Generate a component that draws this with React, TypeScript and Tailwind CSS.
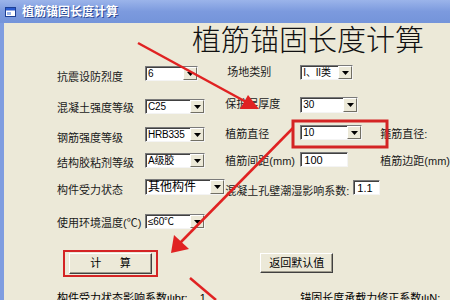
import React from 'react';

// 下拉框 (Win 经典风格)
const Combo: React.FC<{ value: string; w: string; h?: string; big?: boolean }> = ({ value, w, h = 'h-[15px]', big }) => (
  <div className={`${w} ${h} flex bg-white border border-t-[#7a7a7a] border-l-[#7a7a7a] border-b-[#f4f4f4] border-r-[#f4f4f4] shadow-[inset_1px_1px_0_#404040]`}>
    <span className={`flex-1 pl-[2px] pt-[1px] ${big ? 'text-[12px]' : 'text-[10px] tracking-[-0.2px]'} leading-[12px] text-black whitespace-nowrap overflow-hidden`}>{value}</span>
    <span className="w-[14px] shrink-0 h-full bg-[#ece9d8] border border-t-white border-l-white border-b-[#716f64] border-r-[#716f64] flex items-center justify-center">
      <svg width="7" height="4" viewBox="0 0 7 4"><polygon points="0,0 7,0 3.5,4" fill="#000" /></svg>
    </span>
  </div>
);

// 文本框
const Field: React.FC<{ value: string; w: string }> = ({ value, w }) => (
  <div className={`${w} h-[15px] bg-white border border-t-[#7a7a7a] border-l-[#7a7a7a] border-b-[#f4f4f4] border-r-[#f4f4f4] shadow-[inset_1px_1px_0_#404040] pl-[3px] pt-[1px] text-[11px] leading-[12px] text-black`}>
    {value}
  </div>
);

const Label: React.FC<{ text: string; w?: string }> = ({ text, w = '' }) => (
  <span className={`${w} text-[11px] leading-[14px] text-[#1a1a1a] whitespace-nowrap`}>{text}</span>
);

const App: React.FC = () => {
  return (
    <div
      className="relative w-[450px] h-[300px] overflow-hidden bg-[#ece9d8] flex flex-col"
      style={{ fontFamily: '"Liberation Sans", "Noto Sans CJK SC", sans-serif' }}
    >
      {/* 标题栏 */}
      <div className="h-[23px] shrink-0 bg-gradient-to-b from-[#9bb4ea] via-[#7c9ade] to-[#7494da] flex items-center pl-[5px] gap-[6px]">
        <svg width="11" height="10" viewBox="0 0 11 10">
          <rect x="0.5" y="0.5" width="10" height="9" fill="#fff" stroke="#1c3f94" />
          <rect x="1" y="1" width="9" height="2.5" fill="#2a5bd0" />
          <rect x="2" y="5" width="4" height="3" fill="#9bb4ea" />
        </svg>
        <span className="text-[12px] font-bold text-white leading-none [text-shadow:1px_1px_0_#2c4a96]">植筋锚固长度计算</span>
      </div>

      {/* 窗体 */}
      <div className="flex-1 flex flex-col border-l-4 border-[#7f9de0]">
        <div className="h-[41px] pl-[188px] pt-[2px]">
          <span className="text-[29px] leading-[32px] font-light text-[#111]">植筋锚固长度计算</span>
        </div>

        <div className="flex">
          {/* 左列 */}
          <div className="w-[241px] pl-[53px] flex flex-col">
            <div className="mt-[2px] h-[15px] flex items-center">
              <div className="w-[88px] pt-[5px]"><Label text="抗震设防烈度" /></div>
              <Combo value="6" w="w-[53px]" />
            </div>
            <div className="mt-[18px] h-[15px] flex items-center">
              <div className="w-[88px] pt-[1px]"><Label text="混凝土强度等级" /></div>
              <Combo value="C25" w="w-[60px]" />
            </div>
            <div className="mt-[13px] h-[15px] flex items-center">
              <div className="w-[88px] pt-[5px]"><Label text="钢筋强度等级" /></div>
              <Combo value="HRB335" w="w-[60px]" />
            </div>
            <div className="mt-[11px] h-[15px] flex items-center">
              <div className="w-[88px] pt-[3px]"><Label text="结构胶粘剂等级" /></div>
              <Combo value="A级胶" w="w-[60px]" />
            </div>
            <div className="mt-[11px] h-[16px] flex items-center">
              <div className="w-[88px] pt-[4px]"><Label text="构件受力状态" /></div>
              <Combo value="其他构件" w="w-[80px]" h="h-[16px]" big />
            </div>
            <div className="mt-[19px] h-[15px] flex items-center">
              <div className="w-[88px] pt-[1px]"><Label text="使用环境温度(℃)" /></div>
              <Combo value="≤60℃" w="w-[60px]" />
            </div>
            <div className="mt-[21px] ml-[6px] w-[95px] h-[27px] border-2 border-[#d42424] px-[4px] py-[1px]">
              <div className="w-full h-full bg-[#ece9d8] border border-t-white border-l-white border-b-[#404040] border-r-[#404040] shadow-[inset_-1px_-1px_0_#9d9a8c] flex items-center justify-center">
                <span className="text-[11px] leading-none text-black">计&nbsp;&nbsp;&nbsp;&nbsp;&nbsp;&nbsp;算</span>
              </div>
            </div>
            <div className="mt-[14px] text-[11px] leading-[14px] text-black whitespace-nowrap">
              构件受力状态影响系数ψbr:<span className="ml-[12px]">1</span>
            </div>
          </div>

          {/* 右列 */}
          <div className="flex-1 flex flex-col">
            <div className="mt-[1px] h-[15px] flex items-center">
              <div className="w-[75px] pb-[4px] pl-[2px]"><Label text="场地类别" /></div>
              <Combo value="I、II类" w="w-[53px]" />
            </div>
            <div className="mt-[17px] h-[16px] flex items-center">
              <div className="w-[75px] pb-[4px]"><Label text="保护层厚度" /></div>
              <Combo value="30" w="w-[58px]" h="h-[16px]" />
            </div>
            <div className="mt-[12px] h-[15px] flex items-center">
              <div className="w-[75px]"><Label text="植筋直径" /></div>
              <Combo value="10" w="w-[62px]" />
              <span className="ml-[18px]"><Label text="箍筋直径:" /></span>
            </div>
            <div className="mt-[12px] h-[15px] flex items-center">
              <div className="w-[75px]"><Label text="植筋间距(mm)" /></div>
              <Field value="100" w="w-[48px]" />
              <span className="ml-[32px]"><Label text="植筋边距(mm)" /></span>
            </div>
            <div className="mt-[13px] h-[15px] flex items-center">
              <div className="w-[128px] pt-[4px]"><Label text="混凝土孔壁潮湿影响系数:" /></div>
              <Field value="1.1" w="w-[27px]" />
            </div>
            <div className="mt-[58px] ml-[35px] w-[73px] h-[20px] bg-[#ece9d8] border border-t-white border-l-white border-b-[#404040] border-r-[#404040] shadow-[inset_-1px_-1px_0_#9d9a8c] flex items-center justify-center">
              <span className="text-[11px] leading-none text-black">返回默认值</span>
            </div>
            <div className="mt-[18px] ml-[75px] text-[11px] leading-[14px] text-black whitespace-nowrap">
              锚固长度承载力修正系数ψN:
            </div>
          </div>
        </div>
      </div>

      {/* 红色标注 */}
      <svg className="absolute inset-0 pointer-events-none" width="450" height="300" viewBox="0 0 450 300">
        <rect x="293" y="121" width="94" height="26" fill="none" stroke="#d42424" strokeWidth="3" />
        <line x1="138" y1="43" x2="248" y2="103" stroke="#e02222" strokeWidth="2.5" />
        <polygon points="259,109 240,109 248,95" fill="#e02222" />
        <line x1="293" y1="128" x2="180" y2="243" stroke="#e02222" strokeWidth="2.5" />
        <polygon points="171,253 174,235 189,249" fill="#e02222" />
        <line x1="190" y1="278" x2="216" y2="300" stroke="#e02222" strokeWidth="2.5" />
      </svg>
    </div>
  );
};

export default App;
